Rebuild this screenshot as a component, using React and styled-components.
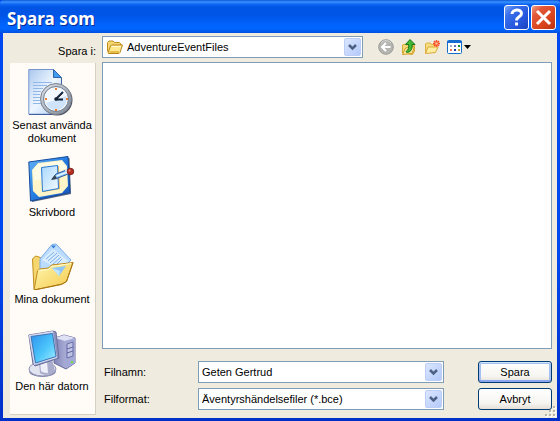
import React from "react";
import styled, { createGlobalStyle } from "styled-components";

const GlobalStyle = createGlobalStyle`
  *, *::before, *::after { box-sizing: border-box; }
  body { margin: 0; }
  body, button, input, select { font: 11px/13px "Liberation Sans", Arial, sans-serif; color: #000; }
`;

const Dialog = styled.main`
  position: relative;
  display: flex;
  flex-direction: column;
  min-height: 100vh;
  background: linear-gradient(#0048f1, #0048f1 60%, #0030c8);
`;

const TitleBar = styled.header`
  display: flex;
  align-items: center;
  gap: 2px;
  height: 33px;
  padding: 2px 4px 0 7px;
  border-radius: 4px 4px 0 0;
  background: linear-gradient(#0a58d8 0, #3a93ff 2px, #1168f4 4px, #0055e5 7px, #0054e6 15px, #0062fc 24px, #0066ff 29px, #0050e0 33px);
`;

const Title = styled.h1`
  flex: 1;
  margin: 0;
  padding-top: 2px;
  color: #fff;
  font: bold 17px/24px "Noto Sans", "Open Sans", sans-serif;
  text-shadow: 1px 1px 0 #0a2a96;
`;

const CaptionButton = styled.button`
  display: grid;
  place-items: center;
  width: 25px;
  height: 25px;
  padding: 0;
  border: 1px solid #fff;
  border-radius: 3px;
  background: ${(p) =>
    p.$danger
      ? "linear-gradient(135deg, #f0a08a, #e2593a 25%, #d9441c 65%, #b83210)"
      : "linear-gradient(135deg, #7fa6f8, #3a70ea 25%, #2558de 65%, #1a43bc)"};
`;

const Body = styled.form`
  flex: 1;
  display: grid;
  grid-template-columns: 86px minmax(0, 1fr);
  grid-template-rows: 22px 1fr;
  gap: 4px 6px;
  margin: 0 3px 3px;
  padding: 3px 5px 3px 7px;
  background: #efebde;
`;

const LookInLabel = styled.label`
  padding-top: 9px;
  text-align: right;
`;

const TopRow = styled.div`
  display: flex;
  align-items: center;
  gap: 15px;
`;

const Combo = styled.div`
  flex: ${(p) => (p.$wide ? "0 1 261px" : "1")};
  display: flex;
  align-items: center;
  min-width: 0;
  height: 22px;
  padding: 1px;
  border: 1px solid #7f9db9;
  background: #fff;

  > svg { flex: none; }
  > svg:first-child { margin-left: 3px; }
`;

const fieldStyle = `
  flex: 1;
  min-width: 0;
  height: 18px;
  padding: 0 2px;
  border: 0;
  outline: 0;
  background: transparent;
`;

const ComboSelect = styled.select`
  ${fieldStyle}
  appearance: none;
  ${(p) => p.$afterIcon && "padding-left: 4px;"}
`;

const ComboInput = styled.input`
  ${fieldStyle}
`;

const Tools = styled.div`
  display: flex;
  align-items: center;
  gap: 7px;
`;

const ToolButton = styled.button`
  display: flex;
  align-items: center;
  padding: 0;
  border: 0;
  background: none;
`;

const Places = styled.nav`
  padding: 5px 1px 3px 0;
  border: solid #d6d0c2;
  border-width: 0 1px 1px 0;
  margin-top: 1px;
  background: #fffcf8;
`;

const Place = styled.button`
  display: flex;
  flex-direction: column;
  align-items: center;
  gap: 3px;
  width: 100%;
  height: 87px;
  padding: 0;
  border: 0;
  background: none;

  &:last-child { height: auto; }
`;

const Main = styled.div`
  display: flex;
  flex-direction: column;
  gap: 12px;
`;

const FileList = styled.section`
  flex: 1;
  border: 1px solid #7f9db9;
  background: #fff;
`;

const Fields = styled.div`
  display: grid;
  grid-template-columns: 96px minmax(0, 1fr) 74px;
  row-gap: 5px;
  align-items: center;
  padding-bottom: 5px;
`;

const FieldLabel = styled.label`
  padding-left: 2px;
`;

const FieldCell = styled.div`
  display: flex;
  margin-right: 34px;
`;

const PushButton = styled.button`
  height: 22px;
  padding: 0;
  border: 1px solid #003c74;
  border-radius: 3px;
  background: linear-gradient(#fff, #f6f5f1 70%, #e4e0d6);
  ${(p) => p.$primary && "box-shadow: inset 0 1px 0 #cee7ff, inset 0 -2px 0 #8aa6ee, inset 0 0 0 2px #a5c1f2;"}
`;

const Grip = styled.svg`
  position: absolute;
  right: 4px;
  bottom: 4px;
`;

const Arrow = () => (
  <svg width="17" height="18" viewBox="0 0 17 18" aria-hidden="true">
    <defs>
      <linearGradient id="arrowFill" x1="0" y1="0" x2="1" y2="1">
        <stop offset="0" stopColor="#dce7ff" />
        <stop offset="1" stopColor="#b3c9fa" />
      </linearGradient>
    </defs>
    <rect x=".5" y=".5" width="16" height="17" rx="1.5" fill="url(#arrowFill)" stroke="#bccdf6" />
    <path d="M5 7l3.500 3.500L12 7" fill="none" stroke="#4d6185" strokeWidth="2.500" />
  </svg>
);

const FolderIcon = () => (
  <svg width="16" height="14" viewBox="0 0 16 14" aria-hidden="true">
    <path d="M.5 11.500V2.500L2 1h4l1.500 1.500h5L14 4v2" fill="#f5d672" stroke="#c08d1e" />
    <path d="M1 13L3.500 6l1-1H15.500L13 12.500l-1 1H1.500z" fill="#ffe98f" stroke="#bb8518" />
    <path d="M2.500 12H12" stroke="#e3ad33" strokeWidth="1.500" />
    <path d="M4.500 6.500h9.500" stroke="#fffad2" />
  </svg>
);

const BackIcon = () => (
  <svg width="16" height="16" viewBox="0 0 16 16" aria-hidden="true">
    <circle cx="8" cy="8" r="7.300" fill="#b4b4b1" stroke="#9b9b98" />
    <path d="M3 4a6.500 6.500 0 0 1 10 0" stroke="#d8d8d6" fill="none" />
    <path d="M12.500 8H4.500M8 4L4 8l4 4" fill="none" stroke="#fff" strokeWidth="2" />
  </svg>
);

const UpIcon = () => (
  <svg width="16" height="16" viewBox="0 0 16 16" aria-hidden="true">
    <path d="M1.500 14V6l3-1 1 1 5-.5 3 1V12l-2 3.500z" fill="#f7d978" stroke="#d7a734" />
    <path d="M1.500 15.500l3-6.500 9-1.500-2.500 7z" fill="#ffed9b" stroke="#d09b27" />
    <path d="M9 .5L14 5.500h-3c.5 4-.5 7-4.500 8-1 0-1.500-.5-1.500-1C7.500 11 8 8.500 7.500 5.500H4.500z" fill="#43b933" stroke="#18751a" />
  </svg>
);

const NewFolderIcon = () => (
  <svg width="16" height="16" viewBox="0 0 16 16" aria-hidden="true">
    <path d="M1.500 14V5l1-1h4l1 1.500h5V8" fill="#f8dd80" stroke="#dfaf43" />
    <path d="M1.500 14.500L4 8h10l-2.500 5.500z" fill="#ffee9f" stroke="#dba73a" />
    <path d="M12.500 1v7M9 4.500h7M10 2l5 5M15 2l-5 5" stroke="#fb4c26" strokeWidth="1.400" />
    <circle cx="12.500" cy="4.500" r="1.300" fill="#ffbd86" />
  </svg>
);

const ViewIcon = () => (
  <svg width="24" height="14" viewBox="0 0 24 14" aria-hidden="true">
    <rect x=".5" y=".5" width="14" height="13" rx="1" fill="#fff" stroke="#146bc9" />
    <path d="M0 1h15v2H0z" fill="#146bd5" />
    <path d="M3 5h2v2H3z" fill="#a5a9cd" />
    <path d="M7 5h2v2H7z" fill="#686dc1" />
    <path d="M11 5h2v2h-2z" fill="#188b28" />
    <path d="M3 9h2v2H3z" fill="#ed7b55" />
    <path d="M7 9h2v2H7z" fill="#123f9f" />
    <path d="M11 9h2v2h-2z" fill="#c7a33b" />
    <path d="M17 5h7l-3.500 4z" fill="#000" />
  </svg>
);

const RecentIcon = () => (
  <svg width="48" height="48" viewBox="0 0 48 48" aria-hidden="true">
    <defs>
      <linearGradient id="page" x1="0" y1="0" x2="1" y2="1">
        <stop offset="0" stopColor="#a9c7ee" />
        <stop offset=".5" stopColor="#eef6ff" />
        <stop offset="1" stopColor="#a8caf3" />
      </linearGradient>
      <linearGradient id="rim" x1="0" y1="0" x2="1" y2="1">
        <stop offset="0" stopColor="#e2e6ec" />
        <stop offset="1" stopColor="#7c8490" />
      </linearGradient>
    </defs>
    <path d="M.8 1.500H25.500L33.500 9.500V46.200H.8z" fill="url(#page)" stroke="#7695cc" />
    <path d="M1 46.500h32.500V10" fill="none" stroke="#41609d" />
    <path d="M25.500 1.500v8h8z" fill="#3f9df0" stroke="#3264ac" />
    <path d="M5 14.500h19M5 17.500h14M5 20.500h10M5 23.500h8M5 26.500h7M5 29.500h7M5 32.500h7M5 35.500h8" stroke="#91b8e9" />
    <circle cx="29" cy="32" r="15.500" fill="#4c5260" />
    <circle cx="28" cy="31" r="15.500" fill="url(#rim)" stroke="#79828f" />
    <circle cx="28" cy="31" r="12.500" fill="#f2f8ff" stroke="#6f7c8c" />
    <path d="M18 35a10.500 10.500 0 0 0 20-7l-10 4z" fill="#cfe3fa" />
    <path d="M27 20h2v2h-2zM27 41h2v2h-2zM17 30h2v2h-2zM38 30h2v2h-2z" fill="#ec7f32" />
    <path d="M35 24l-6.500 6.500M27 31.500h8" fill="none" stroke="#152536" strokeWidth="2" />
    <circle cx="28" cy="31" r="1.800" fill="#152536" />
  </svg>
);

const DesktopIcon = () => (
  <svg width="48" height="48" viewBox="0 0 48 48" aria-hidden="true">
    <defs>
      <linearGradient id="pad" x1="0" y1="0" x2="1" y2="1">
        <stop offset="0" stopColor="#64b3f8" />
        <stop offset=".5" stopColor="#247be0" />
        <stop offset="1" stopColor="#1653b6" />
      </linearGradient>
      <linearGradient id="sheet" x1="0" y1="0" x2="1" y2="1">
        <stop offset="0" stopColor="#a9d7ff" />
        <stop offset="1" stopColor="#f3fbff" />
      </linearGradient>
    </defs>
    <path d="M2 8L41.500 3l1.500 36L4 47z" fill="#506584" />
    <path d="M.8 7L40 1.500l2 36L2.500 46z" fill="url(#pad)" stroke="#164a9c" />
    <path d="M10 8l24-3 5 6 1 20-6 7-23 4-6-6L4 15z" fill="#fff5c8" />
    <path d="M10 9l24-3 4 5v8L6 26l-1-11z" fill="#fffef0" opacity=".7" />
    <path d="M14 13l17-2 1 23-17 3z" fill="#e8b95c" />
    <path d="M13.500 12.500l16-2 1 23-16 3z" fill="url(#sheet)" stroke="#2779d2" />
    <path d="M24 24l4-5 13-5 1.500 4-12.500 5z" fill="#86bff5" stroke="#285a9f" />
    <path d="M28.500 21l11-4" stroke="#e5f6ff" strokeWidth="1.500" />
    <path d="M23 25l4-5 2 4z" fill="#38454e" />
    <path d="M37.500 14l2 5" stroke="#e1e7ec" strokeWidth="2" />
    <circle cx="42.500" cy="16.500" r="3.200" fill="#b52e21" stroke="#75201d" />
    <circle cx="41.500" cy="15.500" r="1" fill="#f58a71" />
  </svg>
);

const DocumentsIcon = () => (
  <svg width="48" height="48" viewBox="0 0 48 48" aria-hidden="true">
    <defs>
      <linearGradient id="folder" x1="0" y1="0" x2="1" y2="1">
        <stop offset="0" stopColor="#fff7b0" />
        <stop offset="1" stopColor="#f4c84b" />
      </linearGradient>
    </defs>
    <path d="M6 47L4.500 17l3-3 5 1.500 2 3L35 14l2 25z" fill="#f6d66e" stroke="#c28f20" />
    <path d="M12 17L24 2.500l4-.5 15 16-15 15-16-6z" fill="#bcdcff" stroke="#78ace9" />
    <path d="M23 3.500h5l-2.500 3z" fill="#3182da" />
    <path d="M25 7l15 12-9 8-17-9z" fill="#d9edff" />
    <path d="M18 17l8-7M20 19l9-8M22 21l9-8M24 23l9-8M26 25l8-8" stroke="#78ade8" />
    <path d="M6 48L9.500 29l2-2 9-1 3-3L45 20.500l-6.500 19-5 3z" fill="url(#folder)" stroke="#bd891c" />
    <path d="M10.500 28.500l10-1 3-3L43 21.500" fill="none" stroke="#fffbd2" />
    <path d="M6 48l28-6 4.500-2.500L45 20.500" fill="none" stroke="#a97512" />
    <path d="M24 26l14-2-7 10z" fill="#8ec6f8" />
    <path d="M24 26l7 8 1-5z" fill="#c4e5ff" />
  </svg>
);

const ComputerIcon = () => (
  <svg width="48" height="48" viewBox="0 0 48 48" aria-hidden="true">
    <defs>
      <linearGradient id="screen" x1="0" y1="0" x2="1" y2="1">
        <stop offset="0" stopColor="#2d91ee" />
        <stop offset=".55" stopColor="#4cc5fb" />
        <stop offset="1" stopColor="#a5f0ff" />
      </linearGradient>
      <linearGradient id="case" x1="0" y1="0" x2="1" y2="0">
        <stop offset="0" stopColor="#8185b9" />
        <stop offset="1" stopColor="#c8cbea" />
      </linearGradient>
    </defs>
    <path d="M27 9l9-3 11 3v25l-9 6-12-6z" fill="url(#case)" stroke="#666998" />
    <path d="M27 9l9-3 11 3-10 3z" fill="#dfe1f5" />
    <path d="M37 12l10-3v25l-8 5-2-1z" fill="#a4a8d5" />
    <path d="M39 15l6-2v14l-6 2z" fill="#bfc2e4" stroke="#6a6fa8" />
    <path d="M39 20l6-2M39 24l6-2" stroke="#5f659e" />
    <path d="M43 32h2v2h-2z" fill="#67e551" />
    <ellipse cx="14.500" cy="42" rx="13.500" ry="6" fill="#7c80a8" />
    <ellipse cx="14.500" cy="40" rx="13.500" ry="7" fill="#e1e3ef" stroke="#9295b5" />
    <path d="M11 33l13-3 3 12c-2 4-12 5-15 2z" fill="#a9acca" />
    <path d="M12 33l7-1 1 12c-4 0-6-1-7-2z" fill="#efeffa" />
    <path d="M.8 6L25 2l3 1 3 26-24 8-2-2z" fill="#8b90bd" stroke="#6a7099" />
    <path d="M.8 6L25 2l4 27L6 36z" fill="#d5d8ee" />
    <path d="M3 7.500L24.500 4.500 28 27.500 7.500 34z" fill="url(#screen)" stroke="#3c75b6" />
  </svg>
);

const places = [
  { label: ["Senast använda", "dokument"], Icon: RecentIcon },
  { label: ["Skrivbord"], Icon: DesktopIcon },
  { label: ["Mina dokument"], Icon: DocumentsIcon },
  { label: ["Den här datorn"], Icon: ComputerIcon },
];

const tools = [
  { name: "Bakåt", Icon: BackIcon },
  { name: "Upp en nivå", Icon: UpIcon },
  { name: "Skapa ny mapp", Icon: NewFolderIcon },
  { name: "Visa-menyn", Icon: ViewIcon },
];

export default function App() {
  return (
    <Dialog>
      <GlobalStyle />
      <TitleBar>
        <Title>Spara som</Title>
        <CaptionButton type="button" aria-label="Hjälp">
          <svg width="17" height="19" viewBox="0 0 17 19" aria-hidden="true">
            <path d="M4 6c0-5 9.500-5.500 9.500-.5 0 3.500-5 3-5 7" fill="none" stroke="#fff" strokeWidth="3" />
            <path d="M7 14.500h3v3H7z" fill="#fff" />
          </svg>
        </CaptionButton>
        <CaptionButton type="button" $danger aria-label="Stäng">
          <svg width="17" height="17" viewBox="0 0 17 17" aria-hidden="true">
            <path d="M2 2l13 13M15 2L2 15" stroke="#fff" strokeWidth="3" />
          </svg>
        </CaptionButton>
      </TitleBar>
      <Body onSubmit={(e) => e.preventDefault()}>
        <LookInLabel htmlFor="look-in">Spara i:</LookInLabel>
        <TopRow>
          <Combo $wide>
            <FolderIcon />
            <ComboSelect id="look-in" $afterIcon>
              <option>AdventureEventFiles</option>
            </ComboSelect>
            <Arrow />
          </Combo>
          <Tools>
            {tools.map(({ name, Icon }) => (
              <ToolButton key={name} type="button" aria-label={name}>
                <Icon />
              </ToolButton>
            ))}
          </Tools>
        </TopRow>
        <Places>
          {places.map(({ label, Icon }) => (
            <Place key={label[0]} type="button">
              <Icon />
              <span>
                {label[0]}
                {label[1] && <br />}
                {label[1]}
              </span>
            </Place>
          ))}
        </Places>
        <Main>
          <FileList aria-label="Filer" />
          <Fields>
            <FieldLabel htmlFor="file-name">Filnamn:</FieldLabel>
            <FieldCell>
              <Combo>
                <ComboInput id="file-name" defaultValue="Geten Gertrud" />
                <Arrow />
              </Combo>
            </FieldCell>
            <PushButton type="submit" $primary>Spara</PushButton>
            <FieldLabel htmlFor="file-type">Filformat:</FieldLabel>
            <FieldCell>
              <Combo>
                <ComboSelect id="file-type">
                  <option>Äventyrshändelsefiler (*.bce)</option>
                </ComboSelect>
                <Arrow />
              </Combo>
            </FieldCell>
            <PushButton type="button">Avbryt</PushButton>
          </Fields>
        </Main>
      </Body>
      <Grip width="11" height="11" viewBox="0 0 11 11" aria-hidden="true">
        <path d="M9 1h2v2H9zM5 5h2v2H5zM9 5h2v2H9zM1 9h2v2H1zM5 9h2v2H5zM9 9h2v2H9z" fill="#fff" />
        <path d="M8 0h2v2H8zM4 4h2v2H4zM8 4h2v2H8zM0 8h2v2H0zM4 8h2v2H4zM8 8h2v2H8z" fill="#b8b4a3" />
      </Grip>
    </Dialog>
  );
}
